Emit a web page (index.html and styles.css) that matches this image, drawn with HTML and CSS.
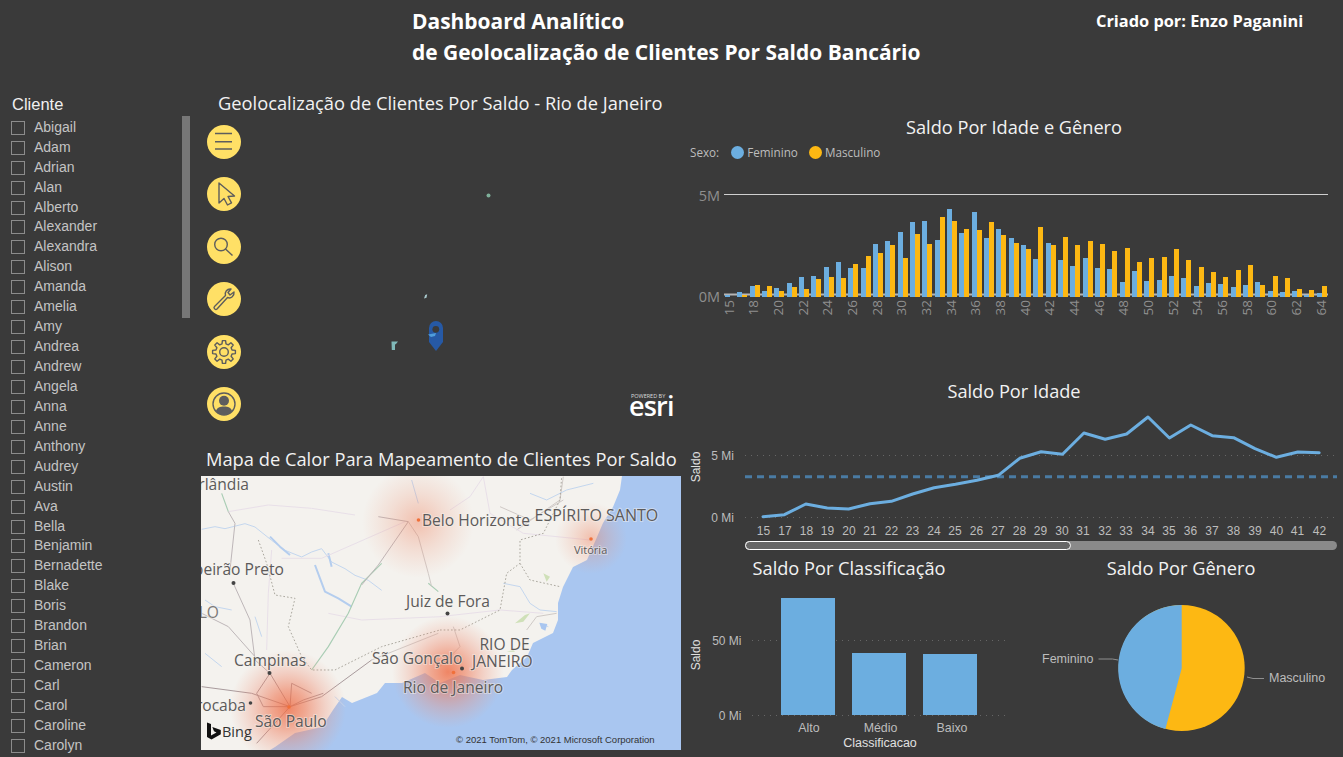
FILE: index.html
```html
<!DOCTYPE html>
<html lang="pt-BR">
<head>
<meta charset="utf-8">
<title>Dashboard Analítico</title>
<link rel="stylesheet" href="styles.css">
</head>
<body>
<div class="page">
  <header class="top">
    <h1 class="main-title">Dashboard Analítico<br>de Geolocalização de Clientes Por Saldo Bancário</h1>
    <p class="author">Criado por: Enzo Paganini</p>
  </header>

  <aside class="slicer">
    <h2 class="slicer-title">Cliente</h2>
    <ul class="slicer-list">
      <li class="slicer-item"><span class="box"></span>Abigail</li>
      <li class="slicer-item"><span class="box"></span>Adam</li>
      <li class="slicer-item"><span class="box"></span>Adrian</li>
      <li class="slicer-item"><span class="box"></span>Alan</li>
      <li class="slicer-item"><span class="box"></span>Alberto</li>
      <li class="slicer-item"><span class="box"></span>Alexander</li>
      <li class="slicer-item"><span class="box"></span>Alexandra</li>
      <li class="slicer-item"><span class="box"></span>Alison</li>
      <li class="slicer-item"><span class="box"></span>Amanda</li>
      <li class="slicer-item"><span class="box"></span>Amelia</li>
      <li class="slicer-item"><span class="box"></span>Amy</li>
      <li class="slicer-item"><span class="box"></span>Andrea</li>
      <li class="slicer-item"><span class="box"></span>Andrew</li>
      <li class="slicer-item"><span class="box"></span>Angela</li>
      <li class="slicer-item"><span class="box"></span>Anna</li>
      <li class="slicer-item"><span class="box"></span>Anne</li>
      <li class="slicer-item"><span class="box"></span>Anthony</li>
      <li class="slicer-item"><span class="box"></span>Audrey</li>
      <li class="slicer-item"><span class="box"></span>Austin</li>
      <li class="slicer-item"><span class="box"></span>Ava</li>
      <li class="slicer-item"><span class="box"></span>Bella</li>
      <li class="slicer-item"><span class="box"></span>Benjamin</li>
      <li class="slicer-item"><span class="box"></span>Bernadette</li>
      <li class="slicer-item"><span class="box"></span>Blake</li>
      <li class="slicer-item"><span class="box"></span>Boris</li>
      <li class="slicer-item"><span class="box"></span>Brandon</li>
      <li class="slicer-item"><span class="box"></span>Brian</li>
      <li class="slicer-item"><span class="box"></span>Cameron</li>
      <li class="slicer-item"><span class="box"></span>Carl</li>
      <li class="slicer-item"><span class="box"></span>Carol</li>
      <li class="slicer-item"><span class="box"></span>Caroline</li>
      <li class="slicer-item"><span class="box"></span>Carolyn</li>
    </ul>
    <div class="slicer-scroll"></div>
  </aside>

  <main class="maps">
    <h2 class="map-title geo-title">Geolocalização de Clientes Por Saldo - Rio de Janeiro</h2>
    <section class="esri-panel">
      <svg class="esri-marks" viewBox="190 118 495 328" aria-hidden="true">
        <circle class="mk-green" cx="488.500" cy="195.500" r="2"/>
        <path class="mk-pale" d="M424 298.500l1.200-3.500 2-.8-.7 3.500z"/>
        <path class="mk-teal" d="M391.500 341.500h6.500l-2 2.500-1 .5v5.500h-3.200z"/>
        <path class="mk-pin" d="M429 328a7 7 0 0 1 14 0v14l-7 9-7-9z"/>
        <circle class="mk-hole" cx="435.800" cy="329.300" r="3.400"/>
        <path class="mk-blip" d="M428 334.500l8-1.500-1 3-4 1z"/>
      </svg>
      <nav class="tools">
        <svg class="tool" viewBox="0 0 34 34"><circle class="tool-bg" cx="17" cy="17" r="17"/><path class="tool-line" d="M8 8.500h17M8 16.800h17M8 24h17"/></svg>
        <svg class="tool" viewBox="0 0 34 34"><circle class="tool-bg" cx="17" cy="17" r="17"/><path class="tool-line" d="M12 6v20l5-4.500 3.500 6.500 4-2.200-3.500-6.300 6.500-.5z"/></svg>
        <svg class="tool" viewBox="0 0 34 34"><circle class="tool-bg" cx="17" cy="17" r="17"/><circle class="tool-line" cx="14" cy="14.500" r="6.300"/><path class="tool-line" d="M18.500 19l7 6.500"/></svg>
        <svg class="tool" viewBox="0 0 34 34"><circle class="tool-bg" cx="17" cy="17" r="17"/><path class="tool-line" d="M7.500 24.500l11-11c-1-3.500 1.500-7 5.500-6.500l-3 3.500 2 2.500 4-3c.5 4-3 7-6.500 5.500l-10.500 11.500c-1.500 1.500-4-1-2.500-2.500z"/></svg>
        <svg class="tool" viewBox="-17 -17 34 34"><circle class="tool-bg" r="17"/><polygon class="tool-line" points="-2,-8.050 -1.600,-11.400 1.600,-11.400 2,-8.050 4.280,-7.110 6.930,-9.190 9.190,-6.930 7.110,-4.280 8.050,-2 11.400,-1.600 11.400,1.600 8.050,2 7.110,4.280 9.190,6.930 6.930,9.190 4.280,7.110 2,8.050 1.600,11.400 -1.600,11.400 -2,8.050 -4.280,7.110 -6.930,9.190 -9.190,6.930 -7.110,4.280 -8.050,2 -11.400,1.600 -11.400,-1.600 -8.050,-2 -7.110,-4.280 -9.190,-6.930 -6.930,-9.190 -4.280,-7.110"/><circle class="tool-line" r="4.300"/></svg>
        <svg class="tool" viewBox="0 0 34 34"><circle class="tool-bg" cx="17" cy="17" r="17"/><circle class="tool-line" cx="17" cy="17" r="11"/><circle class="tool-fill" cx="17" cy="13.800" r="5"/><path class="tool-fill" d="M8.800 24.300C10 20.500 13 19.500 17 19.500s7 1 8.200 4.800A11 11 0 0 1 8.800 24.300z"/></svg>
      </nav>
      <div class="esri-logo">
        <span class="esri-powered">POWERED BY</span>
        <span class="esri-word">esri</span>
      </div>
    </section>
    <h2 class="map-title heat-title">Mapa de Calor Para Mapeamento de Clientes Por Saldo</h2>
    <svg class="heat-map" viewBox="201 476 480 274">
      <defs>
        <radialGradient id="heatStrong">
          <stop offset="0" stop-color="#ee6a42" stop-opacity=".8"/>
          <stop offset=".3" stop-color="#ee7a58" stop-opacity=".62"/>
          <stop offset=".65" stop-color="#ee8a70" stop-opacity=".3"/>
          <stop offset="1" stop-color="#ee9a80" stop-opacity="0"/>
        </radialGradient>
        <radialGradient id="heatSoft">
          <stop offset="0" stop-color="#ee7a55" stop-opacity=".42"/>
          <stop offset=".5" stop-color="#ee8a6a" stop-opacity=".2"/>
          <stop offset="1" stop-color="#ee9a80" stop-opacity="0"/>
        </radialGradient>
      </defs>
      <rect class="land" x="201" y="476" width="480" height="274"/>
      <path class="ocean" d="M622 476l-2 14-7 17-10 16-6 14-10 23-14 7-10 20-5 16v17l-5 13-20 10-6 14-15 13-5 7-24 3-23-5-20 8-15-10-23 10h-17l-8 10-25 10-10-6-9 13-11 17-27 6-20 14-5 3H681V476z"/>
      <g class="soft" transform="translate(195 470) scale(.3333)">
        <path class="river" d="M20 178l40-8 30 6 60-15 30 10 50 40 40 30 50 20 30-15 30-10 30 40 40 20 30 20 40 15 40 30"/>
        <path class="river thick" d="M225 200l30 30 30 25M360 285l15 40 15 40 40 20 40 25M400 250l10 40"/>
        <path class="river" d="M30 550l50 40M650 30l20 70M420 680l30 30M30 390l30 20 50 10M180 440l20 60"/>
        <path class="road-pink" d="M260 265l120 0 250-110M230 240l-10 130-5 170M400 430l100 20 240-10M100 125l120-20 130 10 130 20"/>
        <path class="road-green" d="M80 70l20 55M350 600l50-70 60-100 40-90 60-60M700 340l30 25"/>
        <path class="road" d="M100 125l20 35-15 140M115 340l50 110 15 120 45 40M20 430l80 40 80 90M640 155l-90-15M640 155l-90 130-50 60"/>
        <path class="road-main" d="M225 610l60 100M20 650l150 20 115 40M285 710l95-30 150-110M225 610l-40 60 20 40 80 0 40-20 60-20M285 710l5-70 60 30M285 710l-100 110"/>
        <path class="road-pale" d="M640 155l30 45 30 110 10 40M530 570l200-80"/>
        <path class="border" d="M190 210l25 70 25 95 60 10-20 85 40 90 30 40h70l140-70 175-50"/>
      </g>
      <g class="soft" transform="translate(440 470) scale(.3333)">
        <path class="road-pale" d="M40 470l20 60-60 60M370 20l-10 70-130 90M370 90l-100 60-90-40M260 480l30-40 60-10"/>
        <path class="road-pink" d="M130 20l20 110 100 60 200 20M0 440l180-20 130 10M130 20l-40 60-60 40"/>
        <path class="river" d="M190 340l50 10 30 50 30 20 50 5M270 70l50 20 60-30 80-20M300 460l25 10"/>
        <path class="lagoon" d="M298 458l24 4-6 20-12-6z"/>
        <path class="park" d="M225 460l30-25 15-5-20 25zM310 310l20 10-10 15zM200 545l20-5 5 5z"/>
        <path class="border" d="M0 480h60l120-60 20-110 40-30v-70l70-20 50-100 5-70M240 280l30 50 90 20"/>
      </g>
      <circle cx="418" cy="522" r="56" fill="url(#heatSoft)"/>
      <circle cx="591" cy="538" r="36" fill="url(#heatSoft)"/>
      <circle cx="288" cy="708" r="58" fill="url(#heatStrong)"/>
      <circle cx="448" cy="672" r="56" fill="url(#heatStrong)"/>
      <circle class="dot" cx="233.500" cy="583" r="2"/>
      <circle class="dot" cx="447.500" cy="613.500" r="2"/>
      <circle class="dot" cx="269.500" cy="673" r="2"/>
      <circle class="dot" cx="250.500" cy="703" r="1.800"/>
      <circle class="dot" cx="462" cy="668.500" r="2"/>
      <circle class="dot-o" cx="418.500" cy="520" r="1.800"/>
      <circle class="dot-o" cx="289" cy="707" r="1.800"/>
      <circle class="dot-o" cx="453.500" cy="672.500" r="1.800"/>
      <circle class="dot-o" cx="591" cy="539" r="1.800"/>
      <text class="mp" x="422" y="526">Belo Horizonte</text>
      <text class="mp wide" x="534.500" y="521">ESPÍRITO SANTO</text>
      <text class="mp small" x="574" y="554">Vitória</text>
      <text class="mp" x="249" y="490" text-anchor="end">Uberlândia</text>
      <text class="mp" x="284" y="575" text-anchor="end">Ribeirão Preto</text>
      <text class="mp faint" x="219" y="618" text-anchor="end">SÃO PAULO</text>
      <text class="mp" x="406" y="607">Juiz de Fora</text>
      <text class="mp" x="234" y="666">Campinas</text>
      <text class="mp" x="372" y="664">São Gonçalo</text>
      <text class="mp" x="479.500" y="650">RIO DE</text>
      <text class="mp" x="472" y="667">JANEIRO</text>
      <text class="mp" x="403" y="693">Rio de Janeiro</text>
      <text class="mp" x="246" y="711" text-anchor="end">Sorocaba</text>
      <text class="mp" x="255" y="727">São Paulo</text>
      <path class="bing" d="M207 722.500l4 1.500v11.500l5.500-3-2.500-1.300-1.700-4.200 8.500 3v4.300l-9.300 5.200-4.500-2.500z"/>
      <text class="bing-word" x="222" y="737">Bing</text>
      <text class="copy" x="456" y="743">© 2021 TomTom, © 2021 Microsoft Corporation</text>
    </svg>
  </main>

  <section class="charts">
    <h2 class="chart-title first">Saldo Por Idade e Gênero</h2>
    <div class="legend">
      <span class="legend-name">Sexo:</span>
      <span class="legend-key"><i class="swatch blue"></i>Feminino</span>
      <span class="legend-key"><i class="swatch orange"></i>Masculino</span>
    </div>
    <svg class="chart-age-gender" viewBox="685 163 658 157">
      <path class="axis-top" d="M724 194.500H1328"/>
      <path class="axis-zero" d="M724 294.500H1328"/>
      <path class="bar-blue" d="M725 295V297h5V295ZM737 292V297h5V292ZM750 286V297h5V286ZM762 291V297h5V291ZM774 288V297h5V288ZM787 283V297h5V283ZM799 277V297h5V277ZM811 276V297h5V276ZM824 267V297h5V267ZM836 262V297h5V262ZM848 268V297h5V268ZM861 268V297h5V268ZM873 244V297h5V244ZM885 241V297h5V241ZM898 232V297h5V232ZM910 222V297h5V222ZM922 221V297h5V221ZM935 240V297h5V240ZM947 209V297h5V209ZM959 233V297h5V233ZM972 212V297h5V212ZM984 238V297h5V238ZM996 229V297h5V229ZM1009 238V297h5V238ZM1021 245V297h5V245ZM1033 259V297h5V259ZM1046 243V297h5V243ZM1058 260V297h5V260ZM1070 266V297h5V266ZM1083 258V297h5V258ZM1095 268V297h5V268ZM1107 269V297h5V269ZM1120 282V297h5V282ZM1132 271V297h5V271ZM1144 281V297h5V281ZM1157 280V297h5V280ZM1169 276V297h5V276ZM1181 278V297h5V278ZM1194 286V297h5V286ZM1206 283V297h5V283ZM1218 284V297h5V284ZM1231 287V297h5V287ZM1243 285V297h5V285ZM1255 282V297h5V282ZM1268 291V297h5V291ZM1280 292V297h5V292ZM1292 291V297h5V291ZM1304 295V297h5V295ZM1317 293V297h5V293Z"/>
      <path class="bar-orange" d="M742 295V297h5V295ZM755 285V297h5V285ZM767 286V297h5V286ZM779 291V297h5V291ZM792 287V297h5V287ZM804 289V297h5V289ZM816 279V297h5V279ZM829 277V297h5V277ZM841 278V297h5V278ZM853 264V297h5V264ZM866 256V297h5V256ZM878 253V297h5V253ZM890 245V297h5V245ZM903 258V297h5V258ZM915 234V297h5V234ZM927 244V297h5V244ZM940 217V297h5V217ZM952 221V297h5V221ZM964 229V297h5V229ZM977 230V297h5V230ZM989 222V297h5V222ZM1001 235V297h5V235ZM1014 243V297h5V243ZM1026 249V297h5V249ZM1038 227V297h5V227ZM1051 245V297h5V245ZM1063 237V297h5V237ZM1075 245V297h5V245ZM1088 241V297h5V241ZM1100 244V297h5V244ZM1112 251V297h5V251ZM1125 248V297h5V248ZM1137 262V297h5V262ZM1149 258V297h5V258ZM1162 257V297h5V257ZM1174 249V297h5V249ZM1186 260V297h5V260ZM1199 267V297h5V267ZM1211 272V297h5V272ZM1223 277V297h5V277ZM1236 270V297h5V270ZM1248 265V297h5V265ZM1260 285V297h5V285ZM1273 276V297h5V276ZM1285 278V297h5V278ZM1297 289V297h5V289ZM1309 290V297h5V290ZM1322 286V297h5V286Z"/>
      <text class="ax-big" x="720" y="201">5M</text>
      <text class="ax-big" x="720" y="302">0M</text>
      <g class="ax-rot">
        <text transform="translate(734 300) rotate(-90)">15</text>
        <text transform="translate(758 300) rotate(-90)">18</text>
        <text transform="translate(783 300) rotate(-90)">20</text>
        <text transform="translate(808 300) rotate(-90)">22</text>
        <text transform="translate(832 300) rotate(-90)">24</text>
        <text transform="translate(857 300) rotate(-90)">26</text>
        <text transform="translate(882 300) rotate(-90)">28</text>
        <text transform="translate(906 300) rotate(-90)">30</text>
        <text transform="translate(931 300) rotate(-90)">32</text>
        <text transform="translate(956 300) rotate(-90)">34</text>
        <text transform="translate(980 300) rotate(-90)">36</text>
        <text transform="translate(1005 300) rotate(-90)">38</text>
        <text transform="translate(1030 300) rotate(-90)">40</text>
        <text transform="translate(1054 300) rotate(-90)">42</text>
        <text transform="translate(1079 300) rotate(-90)">44</text>
        <text transform="translate(1104 300) rotate(-90)">46</text>
        <text transform="translate(1128 300) rotate(-90)">48</text>
        <text transform="translate(1153 300) rotate(-90)">50</text>
        <text transform="translate(1178 300) rotate(-90)">52</text>
        <text transform="translate(1202 300) rotate(-90)">54</text>
        <text transform="translate(1227 300) rotate(-90)">56</text>
        <text transform="translate(1252 300) rotate(-90)">58</text>
        <text transform="translate(1276 300) rotate(-90)">60</text>
        <text transform="translate(1301 300) rotate(-90)">62</text>
        <text transform="translate(1326 300) rotate(-90)">64</text>
      </g>
    </svg>

    <h2 class="chart-title second">Saldo Por Idade</h2>
    <svg class="chart-age" viewBox="685 405 658 150">
      <path class="grid" d="M745 455.500H1337M745 517.500H1337"/>
      <path class="avg" d="M745 476.700H1337"/>
      <path class="line" d="M763 516.700L784.400 514.700L805.800 504L827.200 508L848.600 509L870 503.700L891.300 501.300L912.700 494L934.100 487.700L955.500 484.300L976.900 480.300L998.300 475.300L1019.700 458.300L1041.100 451.700L1062.500 454.300L1083.900 433L1105.200 439.300L1126.600 434L1148 417L1169.400 438L1190.800 425L1212.200 435.700L1233.600 437.700L1255 448.700L1276.400 457.300L1297.800 452L1319.200 452.700"/>
      <text class="ax" x="734" y="459.500">5 Mi</text>
      <text class="ax" x="734" y="521.500">0 Mi</text>
      <text class="ax-name" transform="translate(700 467) rotate(-90)">Saldo</text>
      <g class="ticks">
        <text x="763.500" y="534.500">15</text><text x="785" y="534.500">17</text><text x="806.500" y="534.500">18</text><text x="827.500" y="534.500">19</text><text x="849" y="534.500">20</text><text x="870" y="534.500">21</text><text x="891.500" y="534.500">22</text><text x="912.500" y="534.500">23</text><text x="934" y="534.500">24</text><text x="955" y="534.500">25</text><text x="976.500" y="534.500">26</text><text x="998" y="534.500">27</text><text x="1019.500" y="534.500">28</text><text x="1040.500" y="534.500">29</text><text x="1062" y="534.500">30</text><text x="1083" y="534.500">31</text><text x="1105" y="534.500">32</text><text x="1126" y="534.500">33</text><text x="1148" y="534.500">34</text><text x="1169" y="534.500">35</text><text x="1190.500" y="534.500">36</text><text x="1212" y="534.500">37</text><text x="1233.500" y="534.500">38</text><text x="1255" y="534.500">39</text><text x="1276.500" y="534.500">40</text><text x="1297.500" y="534.500">41</text><text x="1319.500" y="534.500">42</text>
      </g>
      <rect class="track" x="745" y="541" width="592" height="9" rx="4.500"/>
      <rect class="thumb" x="745.500" y="541.500" width="325" height="8" rx="4"/>
    </svg>

    <div class="bottom-row">
      <div class="bottom-cell">
        <h2 class="chart-title">Saldo Por Classificação</h2>
        <svg class="chart-bottom" viewBox="685 581 328 176">
          <path class="grid" d="M752 640.500H1007M752 715.500H1007"/>
          <path class="bar-blue" d="M781 598h54v117h-54zM852 653h54v62h-54zM923 654h54v61h-54z"/>
          <text class="ax" x="741.500" y="644.500">50 Mi</text>
          <text class="ax" x="741.500" y="719.500">0 Mi</text>
          <text class="ax-name" transform="translate(700 655) rotate(-90)">Saldo</text>
          <g class="ticks wide">
            <text x="809" y="732">Alto</text>
            <text x="880.500" y="732">Médio</text>
            <text x="952" y="732">Baixo</text>
          </g>
          <text class="ax-name-plain" x="880" y="747">Classificacao</text>
        </svg>
      </div>
      <div class="bottom-cell pie-cell">
        <h2 class="chart-title">Saldo Por Gênero</h2>
        <svg class="chart-bottom" viewBox="1013 581 330 176">
          <circle class="pie-orange" cx="1181.700" cy="668" r="63"/>
          <path class="pie-blue" d="M1181.700 668.300V605A63 63 0 0 0 1165.400 729z"/>
          <path class="leader" d="M1098.500 659h14l5.500 1M1247 677l6 1.500h11"/>
          <text class="pie-label" x="1042" y="663">Feminino</text>
          <text class="pie-label" x="1269" y="682">Masculino</text>
        </svg>
      </div>
    </div>
  </section>
</div>
</body>
</html>
```

FILE: styles.css
```css
* { box-sizing: border-box; }

html, body {
  margin: 0;
  padding: 0;
  height: 757px;
  overflow: hidden;
  background: #3a3a3a;
}

.page {
  display: grid;
  grid-template-columns: 190px 495px 658px;
  grid-template-rows: 90px 667px;
  width: 1343px;
  height: 757px;
  overflow: hidden;
  font-family: "Open Sans", "Noto Sans", sans-serif;
  color: #f2f2f2;
}

/* header */
.top {
  grid-column: 1 / 4;
  display: flex;
  align-items: flex-start;
  padding: 6px 0 0 412px;
}
.main-title {
  margin: 0;
  width: 684px;
  font-size: 20.950px;
  line-height: 31px;
  font-weight: 700;
  color: #fff;
  white-space: nowrap;
}
.author {
  margin: 0;
  font-size: 16.350px;
  line-height: 31px;
  font-weight: 700;
  color: #fff;
  white-space: nowrap;
}

/* slicer */
.slicer {
  position: relative;
  padding: 4px 0 0 11px;
  height: 667px;
  overflow: hidden;
}
.slicer-title {
  margin: 0 0 3.800px 1px;
  height: 20px;
  font: 400 16.500px/20px "Liberation Sans", Arial, sans-serif;
  color: #f0f0f0;
}
.slicer-list {
  margin: 0;
  padding: 0;
  list-style: none;
  display: grid;
  grid-auto-rows: 19.940px;
}
.slicer-item {
  display: flex;
  align-items: center;
  gap: 9px;
  font: 400 14px/19.940px "Liberation Sans", Arial, sans-serif;
  color: #c4c4c4;
}
.box {
  width: 14px;
  height: 14px;
  flex: none;
  border: 1px solid #8c8c8c;
}
.slicer-scroll {
  position: absolute;
  left: 182px;
  top: 26px;
  width: 9px;
  height: 202px;
  background: #777;
}

/* middle column */
.maps {
  display: flex;
  flex-direction: column;
  height: 667px;
}
.map-title {
  margin: 0;
  font-size: 18.300px;
  font-weight: 400;
  color: #f2f2f2;
  white-space: nowrap;
}
.geo-title {
  height: 28px;
  line-height: 26px;
  padding-left: 28px;
}
.esri-panel {
  position: relative;
  height: 328px;
  padding: 7px 0 0 17px;
}
.esri-marks {
  position: absolute;
  inset: 0;
  width: 495px;
  height: 328px;
}
.mk-green { fill: #7fb09a; }
.mk-pale { fill: #a8c8cc; }
.mk-teal { fill: #7fb8b8; }
.mk-pin { fill: #2659a5; }
.mk-hole { fill: #3a3a3a; }
.mk-blip { fill: #4f9ddb; }

.tools {
  position: relative;
  display: flex;
  flex-direction: column;
  gap: 18.400px;
  width: 34px;
}
.tool {
  display: block;
  width: 34px;
  height: 34px;
}
.tool-bg { fill: #ffe066; }
.tool-line {
  fill: none;
  stroke: #5d5d5d;
  stroke-width: 1.400;
  stroke-linejoin: round;
}
.tool-fill { fill: #5d5d5d; }

.esri-logo {
  position: absolute;
  left: 439px;
  top: 275px;
  width: 46px;
  height: 26px;
  color: #fff;
}
.esri-powered {
  position: absolute;
  left: 2px;
  top: .500px;
  font: 400 5.500px/5px "Open Sans", sans-serif;
  color: #ddd;
  white-space: nowrap;
}
.esri-word {
  position: absolute;
  left: 0;
  top: 5.500px;
  font: 600 27px/14px "Open Sans", sans-serif;
  letter-spacing: -.8px;
}

.heat-title {
  height: 27px;
  line-height: 25px;
  padding-left: 16px;
}
.heat-map {
  display: block;
  width: 480px;
  height: 274px;
  margin: 3px 0 0 11px;
  overflow: hidden;
}
.land { fill: #f4f2ee; }
.ocean { fill: #a9c6f0; }
.soft { filter: blur(.5px); }
.river { fill: none; stroke: #c3d6ee; stroke-width: 3; stroke-linejoin: round; }
.river.thick { stroke: #b4cdee; stroke-width: 6; }
.road { fill: none; stroke: #bdb6b8; stroke-width: 3; stroke-linejoin: round; }
.road-main { fill: none; stroke: #a89a9c; stroke-width: 3; stroke-linejoin: round; }
.road-pale { fill: none; stroke: #cfc9c6; stroke-width: 3; stroke-linejoin: round; }
.road-green { fill: none; stroke: #a9cdb4; stroke-width: 3.500; }
.road-pink { fill: none; stroke: #e8dfe8; stroke-width: 3; }
.border { fill: none; stroke: #aaa79e; stroke-width: 3; stroke-dasharray: 5 6; }
.park { fill: #cfe0b8; }
.lagoon { fill: #a9c6f0; }
.dot { fill: #444; }
.dot-o { fill: #f0703a; }
.mp {
  font: 400 15.600px "Open Sans", sans-serif;
  fill: #5c5a5a;
  stroke: #f5f3ef;
  stroke-opacity: .45;
  stroke-width: 2px;
  paint-order: stroke;
}
.mp.wide { font-size: 16px; }
.mp.small { font-size: 11px; }
.mp.faint { fill: #7c7a7a; }
.bing { fill: #111; }
.bing-word { font: 400 14.500px "Open Sans", sans-serif; fill: #333; }
.copy { font: 400 9.500px "Liberation Sans", Arial, sans-serif; fill: #333; }

/* right column */
.charts {
  display: flex;
  flex-direction: column;
  height: 667px;
}
.chart-title {
  margin: 0;
  height: 26px;
  font-size: 18.200px;
  line-height: 26px;
  font-weight: 400;
  text-align: center;
  color: #f2f2f2;
  white-space: nowrap;
}
.chart-title.first { margin-top: 25px; line-height: 24px; }
.chart-title.second { margin-top: 58px; height: 27px; line-height: 27px; }

.legend {
  display: flex;
  align-items: center;
  gap: 11px;
  height: 22px;
  padding-left: 5px;
  font-size: 11.700px;
  color: #bdbdbd;
}
.legend-key {
  display: flex;
  align-items: center;
  gap: 3px;
}
.legend-name { margin-right: 1px; }
.swatch {
  display: block;
  width: 13px;
  height: 13px;
  border-radius: 50%;
}
.swatch.blue { background: #6caee0; }
.swatch.orange { background: #fdb813; }

.chart-age-gender { display: block; width: 658px; height: 157px; }
.chart-age { display: block; width: 658px; height: 150px; }
.axis-top { stroke: #cfcfcf; stroke-width: 1; }
.axis-zero { stroke: #b5b5b5; stroke-width: 2; }
.bar-blue { fill: #6caee0; }
.bar-orange { fill: #fdb813; }
.ax-big {
  font: 400 14.500px "Open Sans", sans-serif;
  fill: #8f8f8f;
  text-anchor: end;
}
.ax-rot text {
  font: 400 13.500px "Open Sans", sans-serif;
  fill: #8f8f8f;
  text-anchor: end;
}
.grid { stroke: #666; stroke-width: 1; stroke-dasharray: 1 5; fill: none; }
.avg { stroke: #4a7ba3; stroke-width: 3; stroke-dasharray: 7 5; fill: none; }
.line {
  fill: none;
  stroke: #6caee0;
  stroke-width: 3;
  stroke-linejoin: round;
  stroke-linecap: round;
}
.ax {
  font: 400 12px "Liberation Sans", Arial, sans-serif;
  fill: #bdbdbd;
  text-anchor: end;
}
.ax-name {
  font: 400 12px "Liberation Sans", Arial, sans-serif;
  fill: #e0e0e0;
  text-anchor: middle;
}
.ax-name-plain {
  font: 400 12.500px "Liberation Sans", Arial, sans-serif;
  fill: #e0e0e0;
  text-anchor: middle;
}
.ticks text {
  font: 400 12px "Liberation Sans", Arial, sans-serif;
  fill: #bdbdbd;
  text-anchor: middle;
}
.ticks.wide text { font-size: 12.400px; }
.track { fill: #8a8a8a; }
.thumb { fill: #666; stroke: #fff; stroke-width: 1; }

.bottom-row {
  display: grid;
  grid-template-columns: 328px 330px;
  height: 202px;
}
.pie-cell .chart-title { padding-left: 6px; }
.chart-bottom { display: block; width: 100%; height: 176px; }
.pie-orange { fill: #fdb813; }
.pie-blue { fill: #6caee0; }
.leader { fill: none; stroke: #8f8f8f; stroke-width: 1; }
.pie-label { font: 400 12.500px "Liberation Sans", Arial, sans-serif; fill: #bdbdbd; }
```
